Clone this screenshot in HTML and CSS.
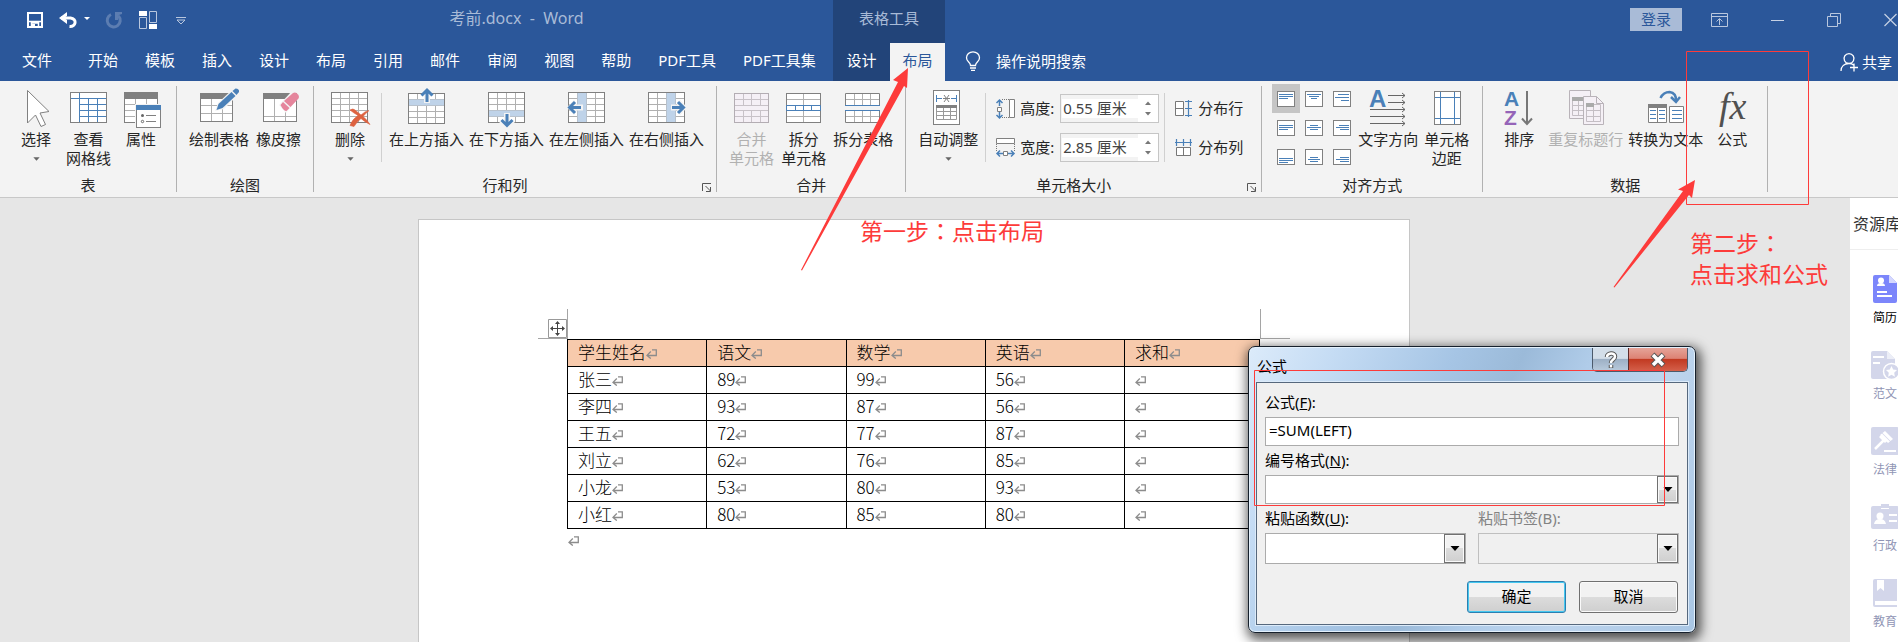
FILE: index.html
```html
<!DOCTYPE html>
<html lang="zh-CN">

<head>
    <meta charset="UTF-8">
    <meta name="viewport" content="width=device-width, initial-scale=1.0">
    <title>考前.docx - Word</title>
    <link rel="stylesheet" href="styles.css">
</head>

<body>
    <!-- shared shapes -->
    <svg class="defs" aria-hidden="true">
        <symbol id="grid" viewBox="0 0 37 31">
            <rect x=".5" y=".5" width="36" height="30" fill="#fff" stroke="#808080" />
            <path d="M9.5 1v29M18.5 1v29M27.5 1v29M1 6.5h35M1 12.5h35M1 18.5h35M1 24.5h35" stroke="#b0b0b0" fill="none" />
        </symbol>
        <symbol id="enter" viewBox="0 0 11 10">
            <path d="M6 .8h4.3v5.7H1.2M4.8 2.5L1 6.4l3.8 3.2" fill="none" stroke="#8c8c8c" stroke-width="1.3" />
        </symbol>
        <symbol id="launcher" viewBox="0 0 10 9">
            <path d="M.5 8V.5H9M3.500 3l5 5M8.500 4v4.500H4" fill="none" stroke="#555" />
        </symbol>
        <symbol id="drop" viewBox="0 0 10 5">
            <path d="M.5 0h9L5 5z" />
        </symbol>
    </svg>

    <header>
        <div class="titlebar flex">
            <div class="quick flex">
                <button type="button" aria-label="保存"><svg width="16" height="16"><path d="M1 1h14v14H1z" fill="none" stroke="#fff" stroke-width="2" /><path d="M1 9.500h14M4.500 15v-4h7v4" fill="none" stroke="#fff" stroke-width="1.500" /><path d="M5 12h3v4H5z" fill="#fff" /></svg></button>
                <button type="button" aria-label="撤消"><svg width="31" height="16"><path d="M2 6h9.500c7 1 5.500 9 -1 8.500" fill="none" stroke="#fff" stroke-width="3" /><path d="M8 0L0 6l8 6V8L5 6l3-2z" fill="#fff" /><path d="M25 5h6l-3 3z" fill="#fff" /></svg></button>
                <button type="button" aria-label="重复"><svg width="17" height="16"><path d="M5 2.500a6.500 6.500 0 1 0 7.500 1.500" fill="none" stroke="#5c7db1" stroke-width="3" /><path d="M9 0h7v2l-3 1-1 5H9z" fill="#5c7db1" /></svg></button>
                <button type="button" aria-label="窗口"><svg width="18" height="18"><path d="M.5 6.500h7v11h-7zM10.500 .5h7v11h-7z" fill="none" stroke="#b9c7de" /><path d="M0 0h8v5H0zM10 13h8v5h-8z" fill="#fff" /></svg></button>
                <button type="button" aria-label="自定义"><svg width="10" height="8"><path d="M0 1.500h10M1 4l4 4 4-4z" fill="none" stroke="#b9c7de" /></svg></button>
            </div>
            <div class="doc-title">考前.docx&nbsp; -&nbsp; Word</div>
            <div class="context-title">表格工具</div>
            <div class="window flex">
                <button class="login" type="button">登录</button>
                <button type="button" aria-label="功能区"><svg width="17" height="14"><path d="M.5 .5h16v13H.5zM.5 3.500h16M8.500 12V6M5.500 8.500l3-3 3 3" fill="none" stroke="#b9c7de" /></svg></button>
                <button type="button" aria-label="最小化"><svg width="13" height="14"><path d="M0 7.500h13" stroke="#c6d1e4" /></svg></button>
                <button type="button" aria-label="还原"><svg width="14" height="14"><path d="M.5 3.500h10v10H.5zM3.500 3V.5h10v10H11" fill="none" stroke="#b9c7de" /></svg></button>
                <button type="button" aria-label="关闭"><svg width="13" height="14"><path d="M.5 1l12 12M12.500 1l-12 12" stroke="#c6d1e4" stroke-width="1.200" /></svg></button>
            </div>
        </div>
        <nav class="tabs flex">
            <div class="main-tabs flex">
                <a class="file" href="#">文件</a>
                <a href="#">开始</a>
                <a href="#">模板</a>
                <a href="#">插入</a>
                <a href="#">设计</a>
                <a href="#">布局</a>
                <a href="#">引用</a>
                <a href="#">邮件</a>
                <a href="#">审阅</a>
                <a href="#">视图</a>
                <a href="#">帮助</a>
                <a href="#">PDF工具</a>
                <a href="#">PDF工具集</a>
            </div>
            <div class="context-tabs flex">
                <a href="#">设计</a>
                <a class="active" href="#">布局</a>
            </div>
            <a class="tell flex" href="#"><svg width="16" height="20"><path d="M5.500 14.500C5.500 11 1.500 11 1.500 6.800a6.500 6 0 0 1 13 0C14.500 11 10.500 11 10.500 14.500zM5 17h6M6 19.300h4" fill="none" stroke="#fff" stroke-width="1.300" /></svg>操作说明搜索</a>
            <a class="share flex" href="#"><svg width="18" height="19"><path d="M8.500 10.500a5 5 0 1 1 1 0M1 18c0-5 3.500-7.500 8-7.500 2 0 3.500 .5 4.500 1.500M14 10.500v8M10 14.500h8" fill="none" stroke="#fff" stroke-width="1.300" /></svg>共享</a>
        </nav>
    </header>

    <div class="ribbon flex">
        <section class="group g-table">
            <div class="tools">
                <button class="tool" type="button">
                    <svg class="icon"><path d="M10.500 2.500V35l8-8 5.500 11.500 4.500-2L23 25l9-1.500z" fill="#fff" stroke="#808080" /></svg>
                    <span>选择</span><svg class="caret"><use href="#drop" /></svg>
                </button>
                <button class="tool" type="button">
                    <svg class="icon"><rect x=".5" y="4.500" width="36" height="30" fill="#fff" stroke="#808080" /><path d="M9.500 5v29M1 10.500h35M18.500 11v23M27.500 11v23M10 16.500h26M10 22.500h26M10 28.500h26" stroke="#4a80b8" fill="none" /></svg>
                    <span>查看<br>网格线</span>
                </button>
                <button class="tool" type="button">
                    <svg class="icon"><rect x="2.500" y="4.500" width="33" height="30" fill="#fff" stroke="#808080" /><path d="M13.500 10v25M24.500 10v25M3 16.500h33M3 22.500h33M3 28.500h33" stroke="#b0b0b0" /><path d="M2 4h34v7H2z" fill="#808080" /><path d="M13 16h27v24H13z" fill="#f3f3f3" /><rect x="14.500" y="17.500" width="24" height="22" fill="#fff" stroke="#808080" /><path d="M14 17h25v5H14z" fill="#4a80b8" /><circle cx="20.500" cy="27.500" r="1.500" fill="#666" /><circle cx="20.500" cy="33.500" r="1.200" fill="none" stroke="#666" /><path d="M24 27.500h10M24 33.500h10" stroke="#808080" /></svg>
                    <span>属性</span>
                </button>
            </div>
            <h2>表</h2>
        </section>

        <section class="group g-draw">
            <div class="tools">
                <button class="tool" type="button">
                    <svg class="icon"><rect x=".5" y="5.500" width="32" height="28" fill="#fff" stroke="#808080" /><path d="M11.500 11v22M22.500 11v22M1 17.500h31M1 25.500h31" stroke="#b0b0b0" /><path d="M0 5h33v6H0z" fill="#808080" /><path d="M15 23l3-8L35-1l6 5-17 17z" fill="#f3f3f3" /><path d="M16.500 22l2-6 13-12 4 4-13 12z" fill="#4a80b8" /><path d="M32.500 3l3-2.500q4 0 3.500 3.500l-2.500 3z" fill="#4a80b8" /></svg>
                    <span>绘制表格</span>
                </button>
                <button class="tool" type="button">
                    <svg class="icon"><rect x="3.500" y="5.500" width="33" height="28" fill="#fff" stroke="#808080" /><path d="M14.500 11v22M25.500 11v22M4 28.500h32" stroke="#b0b0b0" /><path d="M3 5h34v6H3z" fill="#808080" /><path d="M19 17L32 3l8 5-14 17z" fill="#f3f3f3" /><path d="M24 13l9-8q2-1 3.500 0l2 2q1 2 0 3.500l-8 8.500zM20.500 17l2.500-3 6.500 6-3 3q-3 0-6-6z" fill="#e5859c" /></svg>
                    <span>橡皮擦</span>
                </button>
            </div>
            <h2>绘图</h2>
        </section>

        <section class="group g-rows">
            <div class="tools">
                <button class="tool" type="button">
                    <svg class="icon"><use href="#grid" y="4" width="37" height="31" /><path d="M19 22q3-2 5 0l6 5q4-4 8-4.500-4 3.500-6 6 4 3 7 8-6-3-9-6-4 3-7 8l-4-1q2-6 8-10-5-3-8-5.500z" fill="#dd6240" stroke="#dd6240" stroke-width=".6" /></svg>
                    <span>删除</span><svg class="caret"><use href="#drop" /></svg>
                </button>
                <i class="divider"></i>
                <div class="inserts">
                    <button class="tool" type="button">
                        <svg class="icon"><use href="#grid" y="5" width="37" height="31" /><path d="M1 11.500h35v6H1z" fill="#bfd3e9" /><path d="M13 7l6-7 6 7-3 2v6h-6V9z" fill="#f3f3f3" /><path d="M19 14V3M13.500 7.500L19 2l5.500 5.500" fill="none" stroke="#4a80b8" stroke-width="3" /></svg>
                        <span>在上方插入</span>
                    </button>
                    <button class="tool" type="button">
                        <svg class="icon"><use href="#grid" y="4" width="37" height="31" /><path d="M1 22.500h35v6H1z" fill="#bfd3e9" /><path d="M11 34l5-2v-7h6v7l5 2-8 7z" fill="#f3f3f3" /><path d="M19 26v11M13.500 32l5.500 5.500 5.500-5.500" fill="none" stroke="#4a80b8" stroke-width="3" /></svg>
                        <span>在下方插入</span>
                    </button>
                    <button class="tool" type="button">
                        <svg class="icon"><use href="#grid" y="4" width="37" height="31" /><path d="M9.500 5h9v29h-9z" fill="#bfd3e9" /><path d="M-1 19.500l7-8 3 5h6v6H9l-3 5z" fill="#f3f3f3" /><path d="M13 19.500H2M7 14l-5.500 5.500L7 25" fill="none" stroke="#4a80b8" stroke-width="3" /></svg>
                        <span>在左侧插入</span>
                    </button>
                    <button class="tool" type="button">
                        <svg class="icon"><use href="#grid" y="4" width="37" height="31" /><path d="M18.500 5h9v29h-9z" fill="#bfd3e9" /><path d="M39 19.500l-7-8-3 5h-6v6h6l3 5z" fill="#f3f3f3" /><path d="M24 19.500h11M30 14l5.500 5.500L30 25" fill="none" stroke="#4a80b8" stroke-width="3" /></svg>
                        <span>在右侧插入</span>
                    </button>
                </div>
            </div>
            <h2>行和列</h2>
            <svg class="launcher"><use href="#launcher" /></svg>
        </section>

        <section class="group g-merge">
            <div class="tools">
                <button class="tool" type="button" disabled>
                    <svg class="icon"><rect x="1.500" y="5.500" width="34" height="29" fill="#f5f0f6" stroke="#b3adb3" /><path d="M2 11.500h33M2 17.500h33M2 22.500h33M2 28.500h33M10.500 6v11M18.500 6v11M27.500 6v11M10.500 23v11M18.500 23v11M27.500 23v11" stroke="#c8c2c8" /></svg>
                    <span>合并<br>单元格</span>
                </button>
                <button class="tool" type="button">
                    <svg class="icon"><rect x="1.500" y="5.500" width="34" height="29" fill="#fff" stroke="#808080" /><path d="M2 11.500h33M2 28.500h33M18.500 6v11M18.500 23v11" stroke="#b0b0b0" /><path d="M1.500 17.500h34v5h-34zM10.500 18v5M18.500 18v5M26.500 18v5" fill="none" stroke="#4a80b8" /></svg>
                    <span>拆分<br>单元格</span>
                </button>
                <button class="tool" type="button">
                    <svg class="icon"><path d="M1 5h35v13H1zM1 22h35v13H1z" fill="#fff" /><path d="M10.500 6v11M18.500 6v11M26.500 6v11M2 11.500h33M10.500 23v11M18.500 23v11M26.500 23v11M2 28.500h33" stroke="#b0b0b0" /><path d="M1.500 17V5.500h34V17M1.500 23v11.500h34V23" fill="none" stroke="#808080" /><path d="M1 17.500h35M1 22.500h35" stroke="#4a80b8" /></svg>
                    <span>拆分表格</span>
                </button>
            </div>
            <h2>合并</h2>
        </section>

        <section class="group g-size">
            <div class="tools">
                <button class="tool" type="button">
                    <svg class="icon"><rect x="4.500" y="2.500" width="26" height="34" fill="#fff" stroke="#808080" /><path d="M7.500 7v7M27.500 7v7M8 10.500h5M22 10.500h5" stroke="#4a80b8" /><path d="M15 7l5 7M20 7l-5 7M14 10.500h7" stroke="#808080" /><path d="M7.500 18.500h20v13h-20zM14.500 20v11M21.500 20v11M8 23.500h19M8 27.500h19" fill="none" stroke="#999" /><path d="M7 17h21v3H7z" fill="#808080" /></svg>
                    <span>自动调整</span><svg class="caret"><use href="#drop" /></svg>
                </button>
                <i class="divider"></i>
                <div class="size-rows">
                    <div class="size-row flex">
                        <svg width="19" height="20"><path d="M13.500 .5h5v18h-5z" fill="#fff" stroke="#808080" /><path d="M6 .5h7M6 18.500h7" stroke="#777" stroke-dasharray="1 1" /><path d="M3.500 7V1M.5 4l3-3 3 3M3.500 13v6M.5 16l3 3 3-3" fill="none" stroke="#4a80b8" stroke-width="1.500" /><path d="M1.500 8.500h4v4h-4z" fill="#fff" stroke="#808080" /></svg>
                        <label for="row-height">高度:</label>
                        <div class="spin flex">
                            <input type="text" id="row-height" value="0.55 厘米">
                            <span class="steps"><svg><path d="M0 4l3-3.500L6 4z" /></svg><svg><path d="M0 0h6L3 3.500z" /></svg></span>
                        </div>
                    </div>
                    <div class="size-row flex">
                        <svg width="19" height="20"><path d="M.5 .5h18v5H.5z" fill="#fff" stroke="#808080" /><path d="M.5 6v7M18.500 6v7" stroke="#777" stroke-dasharray="1 1" /><path d="M7 15.500H1M4 12.500l-3 3 3 3M12 15.500h6M15 12.500l3 3-3 3" fill="none" stroke="#4a80b8" stroke-width="1.500" /><path d="M7.500 13.500h4v4h-4z" fill="#fff" stroke="#808080" /></svg>
                        <label for="col-width">宽度:</label>
                        <div class="spin flex">
                            <input type="text" id="col-width" value="2.85 厘米">
                            <span class="steps"><svg><path d="M0 4l3-3.500L6 4z" /></svg><svg><path d="M0 0h6L3 3.500z" /></svg></span>
                        </div>
                    </div>
                </div>
                <i class="divider"></i>
                <div class="size-rows">
                    <button class="small flex" type="button"><svg width="17" height="17"><path d="M.5 1.500h8v14h-8zM.5 8.500h8" fill="#fff" stroke="#777" /><path d="M10 1.500h7M10 15.500h7M10 8.500h7M13.500 0v17" stroke="#4a80b8" stroke-width="1.200" /></svg>分布行</button>
                    <button class="small flex" type="button"><svg width="17" height="17"><path d="M1.500 8.500h14v8h-14zM8.500 8.500v8" fill="#fff" stroke="#777" /><path d="M0 3.500h17M1.500 0v7M8.500 0v7M15.500 0v7" stroke="#4a80b8" stroke-width="1.200" /></svg>分布列</button>
                </div>
            </div>
            <h2>单元格大小</h2>
            <svg class="launcher"><use href="#launcher" /></svg>
        </section>

        <section class="group g-align">
            <div class="tools">
                <div class="align-grid">
                    <button class="on" type="button" aria-label="靠上左对齐"><svg><path d="M2 3.500h14M2 5.500h14M2 7.500h9" /></svg></button>
                    <button type="button" aria-label="靠上居中"><svg><path d="M2 3.500h14M4 5.500h10M6 7.500h6" /></svg></button>
                    <button type="button" aria-label="靠上右对齐"><svg><path d="M5 3.500h11M2 6.500h14M8 9.500h8" /></svg></button>
                    <button type="button" aria-label="左对齐"><svg><path d="M2 5.500h14M2 7.500h14M2 9.500h9" /></svg></button>
                    <button type="button" aria-label="居中"><svg><path d="M5 5.500h8M2 7.500h14M5 9.500h8" /></svg></button>
                    <button type="button" aria-label="右对齐"><svg><path d="M6 5.500h10M3 7.500h13M7 9.500h9" /></svg></button>
                    <button type="button" aria-label="靠下左对齐"><svg><path d="M2 9.500h14M2 11.500h14M2 13.500h9" /></svg></button>
                    <button type="button" aria-label="靠下居中"><svg><path d="M5 8.500h8M3 10.500h12M5 12.500h8" /></svg></button>
                    <button type="button" aria-label="靠下右对齐"><svg><path d="M7 8.500h9M3 10.500h13M7 12.500h9" /></svg></button>
                </div>
                <button class="tool" type="button">
                    <svg class="icon"><text class="letter" x="0" y="19">A</text><path d="M19 7.500h17M19 14.500h17M1 21.500h35M1 28.500h35M1 35.500h35M33 5l3 2.500-3 2.500M33 12l3 2.500-3 2.500M33 19l3 2.500-3 2.500M33 26l3 2.500-3 2.500M33 33l3 2.500-3 2.500" fill="none" stroke="#666" /></svg>
                    <span>文字方向</span>
                </button>
                <button class="tool" type="button">
                    <svg class="icon"><rect x="6.500" y="3.500" width="26" height="33" fill="#fff" stroke="#808080" /><path d="M12.500 4v32M26.500 4v32M7 9.500h25M7 30.500h25" stroke="#4a80b8" /></svg>
                    <span>单元格<br>边距</span>
                </button>
            </div>
            <h2>对齐方式</h2>
        </section>

        <section class="group g-data">
            <div class="tools">
                <button class="tool" type="button">
                    <svg class="icon"><text class="sort-a" x="4" y="18">A</text><text class="sort-z" x="4" y="37">Z</text><path d="M27 3v33M22 30.500l5 5.500 5-5.500" fill="none" stroke="#777" stroke-width="2" /></svg>
                    <span>排序</span>
                </button>
                <button class="tool" type="button" disabled>
                    <svg class="icon"><path d="M2.500 2.500h21v28h-21z" fill="#f5f0f6" stroke="#b9b3b9" /><path d="M5.500 9.500h12v18h-12zM11.500 10v17M6 17.500h11M6 22.500h11" fill="none" stroke="#c4bec4" /><path d="M5 9h12v4H5z" fill="#aaa" /><path d="M16.500 8.500h13l7 7v21h-20z" fill="#f5f0f6" stroke="#b9b3b9" /><path d="M29.500 8.500v7h7" fill="none" stroke="#b9b3b9" /><path d="M19.500 16.500h14v17h-14zM26.500 17v17M20 22.500h13M20 28.500h13" fill="none" stroke="#c4bec4" /><path d="M19 15h8v4h-8z" fill="#aaa" /></svg>
                    <span>重复标题行</span>
                </button>
                <button class="tool" type="button">
                    <svg class="icon"><path d="M1.500 17.500h18v17h-18zM10.500 20v15" fill="#fff" stroke="#808080" /><path d="M1 16h19v4H1z" fill="#808080" /><path d="M3 22.500h6M3 26.500h6M3 30.500h6M12 22.500h6M12 26.500h6M12 30.500h6" stroke="#4a80b8" /><path d="M22.500 18.500h14v16h-14z" fill="#fff" stroke="#808080" /><path d="M25 22.500h10M25 26.500h10M25 30.500h10" stroke="#4a80b8" /><path d="M13.500 10q3-6 9-6 7 1 6.500 9M24 9l5 5 4-5" fill="none" stroke="#4a80b8" stroke-width="2.500" /></svg>
                    <span>转换为文本</span>
                </button>
                <button class="tool" type="button">
                    <svg class="icon"><text class="fx" x="6" y="31">fx</text></svg>
                    <span>公式</span>
                </button>
            </div>
            <h2>数据</h2>
        </section>
    </div>

    <main class="workspace flex">
        <div class="canvas flex">
            <article class="page">
                <div class="margins flex">
                    <span class="corner left"><svg width="19" height="19"><path d="M.5 .5h18v18H.5z" fill="#fff" stroke="#999" /><path d="M9.500 3v13M3 9.500h13" stroke="#444" /><path d="M9.500 2l2.500 3H7zM9.500 17L7 14h5zM2 9.500L5 7v5zM17 9.500L14 12V7z" fill="#444" /></svg></span>
                    <span class="corner right"></span>
                </div>
                <table>
                    <thead>
                        <tr><th>学生姓名<svg class="enter"><use href="#enter" /></svg></th><th>语文<svg class="enter"><use href="#enter" /></svg></th><th>数学<svg class="enter"><use href="#enter" /></svg></th><th>英语<svg class="enter"><use href="#enter" /></svg></th><th class="sum">求和<svg class="enter"><use href="#enter" /></svg></th></tr>
                    </thead>
                    <tbody>
                        <tr><td>张三<svg class="enter"><use href="#enter" /></svg></td><td>89<svg class="enter"><use href="#enter" /></svg></td><td>99<svg class="enter"><use href="#enter" /></svg></td><td>56<svg class="enter"><use href="#enter" /></svg></td><td><svg class="enter"><use href="#enter" /></svg></td></tr>
                        <tr><td>李四<svg class="enter"><use href="#enter" /></svg></td><td>93<svg class="enter"><use href="#enter" /></svg></td><td>87<svg class="enter"><use href="#enter" /></svg></td><td>56<svg class="enter"><use href="#enter" /></svg></td><td><svg class="enter"><use href="#enter" /></svg></td></tr>
                        <tr><td>王五<svg class="enter"><use href="#enter" /></svg></td><td>72<svg class="enter"><use href="#enter" /></svg></td><td>77<svg class="enter"><use href="#enter" /></svg></td><td>87<svg class="enter"><use href="#enter" /></svg></td><td><svg class="enter"><use href="#enter" /></svg></td></tr>
                        <tr><td>刘立<svg class="enter"><use href="#enter" /></svg></td><td>62<svg class="enter"><use href="#enter" /></svg></td><td>76<svg class="enter"><use href="#enter" /></svg></td><td>85<svg class="enter"><use href="#enter" /></svg></td><td><svg class="enter"><use href="#enter" /></svg></td></tr>
                        <tr><td>小龙<svg class="enter"><use href="#enter" /></svg></td><td>53<svg class="enter"><use href="#enter" /></svg></td><td>80<svg class="enter"><use href="#enter" /></svg></td><td>93<svg class="enter"><use href="#enter" /></svg></td><td><svg class="enter"><use href="#enter" /></svg></td></tr>
                        <tr><td>小红<svg class="enter"><use href="#enter" /></svg></td><td>80<svg class="enter"><use href="#enter" /></svg></td><td>85<svg class="enter"><use href="#enter" /></svg></td><td>80<svg class="enter"><use href="#enter" /></svg></td><td><svg class="enter"><use href="#enter" /></svg></td></tr>
                    </tbody>
                </table>
                <p class="after-table"><svg class="enter"><use href="#enter" /></svg></p>
            </article>
        </div>
        <aside class="library">
            <h3>资源库</h3>
            <a class="active" href="#"><svg><path d="M2 2q0-2 2-2h14l8 8v18q0 2-2 2H4q-2 0-2-2z" fill="#7c86fb" /><path d="M18 0v8h8z" fill="#d5d8fe" /><circle cx="10" cy="5.500" r="3" fill="#fff" /><path d="M6 11q0-3 4-3t4 3zM6 16h10v2H6zM6 20h15v2H6z" fill="#fff" /></svg>简历</a>
            <a href="#"><svg><path d="M0 2q0-2 2-2h14l8 8v20H2q-2 0-2-2z" fill="#d3d6ea" /><path d="M16 0v8h8z" fill="#eceef7" /><path d="M2 5h11v2H2zM2 11h7v2H2z" fill="#fff" /><circle cx="20.500" cy="20.500" r="8" fill="#d3d6ea" stroke="#fff" stroke-width="1.500" /><path d="M20.500 15l1.700 3.600 3.800 .5-2.800 2.700 .7 3.900-3.400-1.900-3.400 1.900 .7-3.900-2.800-2.700 3.800-.5z" fill="#fff" /></svg>范文</a>
            <a href="#"><svg><rect width="28" height="28" rx="2" fill="#d3d6ea" /><path d="M14 4l8 8-2.500 2-8-8zM9 8l2-1.500 8 8L17 16zM8 10l3-3 6 6-3 3z" fill="#fff" /><path d="M13 13l-9 9" stroke="#fff" stroke-width="2.500" /><path d="M13 23h12v2H13z" fill="#fff" /></svg>法律</a>
            <a href="#"><svg><path d="M0 5q0-2 2-2h24q2 0 2 2v19q0 2-2 2H2q-2 0-2-2zM10 1h8v5h-8z" fill="#d3d6ea" /><path d="M10 5.500h8" stroke="#fff" /><circle cx="9" cy="13" r="3.500" fill="#fff" /><path d="M3 21q1-5 6-5t6 5zM18 11h8v2h-8zM18 17h8v2h-8z" fill="#fff" /></svg>行政</a>
            <a href="#"><svg><path d="M2 2q0-2 2-2h22v28H4q-2 0-2-2z" fill="#d3d6ea" /><path d="M6 1h7v11l-3.500-3L6 12zM4 22h22v4H4z" fill="#fff" /></svg>教育</a>
        </aside>
    </main>

    <form class="dialog" aria-label="公式">
        <div class="dialog-title flex">
            <span>公式</span>
            <div class="caption flex">
                <button class="help" type="button" aria-label="帮助"><svg width="14" height="18"><path d="M3 6c0-4 8-5 8-.5C11 8.500 7 8.500 7 12M7 14v3" fill="none" stroke="#555" stroke-width="4.500" /><path d="M3 6c0-4 8-5 8-.5C11 8.500 7 8.500 7 12M7 14v2.500" fill="none" stroke="#fff" stroke-width="2.500" /></svg></button>
                <button class="close" type="button" aria-label="关闭"><svg width="16" height="14"><path d="M2.500 1.500l11 11M13.500 1.500l-11 11" stroke="#555" stroke-width="5.500" /><path d="M3 2l10 10M13 2L3 12" stroke="#fff" stroke-width="3.500" /></svg></button>
            </div>
        </div>
        <div class="dialog-body">
            <label for="formula">公式(<u>F</u>):</label>
            <input type="text" id="formula" value="=SUM(LEFT)">
            <label for="format">编号格式(<u>N</u>):</label>
            <div class="combo"><select id="format"><option></option></select><i><svg><use href="#drop" /></svg></i></div>
            <div class="pair flex">
                <div>
                    <label for="func">粘贴函数(<u>U</u>):</label>
                    <div class="combo tall"><select id="func"><option></option></select><i><svg><use href="#drop" /></svg></i></div>
                </div>
                <div>
                    <label class="off" for="bookmark">粘贴书签(B):</label>
                    <div class="combo tall"><select id="bookmark" disabled><option></option></select><i><svg><use href="#drop" /></svg></i></div>
                </div>
            </div>
            <div class="actions flex">
                <button class="ok" type="button">确定</button>
                <button type="button">取消</button>
            </div>
        </div>
    </form>

    <!-- tutorial marks over the window -->
    <svg class="marks" width="1898" height="642" aria-hidden="true">
        <path d="M908 68L893 80l5 2L801 270l1 .5L904 86l3 2zM1695 180l-17 9.500 5 1.500L1613.500 287l1 .5L1689 195l3 3z" fill="#fd3b3a" />
        <path d="M1686.500 51.500h122v153h-122zM1254.500 370.500h410v135h-410z" fill="none" stroke="#fd3b3a" />
    </svg>
    <p class="note step-one">第一步<span lang="zh-TW">：</span>点击布局</p>
    <p class="note step-two">第二步<span lang="zh-TW">：</span><br>点击求和公式</p>
</body>

</html>
```
FILE: styles.css
```css
* {
    box-sizing: border-box;
    padding: 0;
    margin: 0;
}

:root {
    --blue: #2b579a;
    --dark-blue: #224479;
    --pale: #a9bbd7;
    --red: #fd3b3a;
    --context-left: 833px;
    --context-width: 112px;
}

body {
    min-height: 100vh;
    display: flex;
    flex-direction: column;
    position: relative;
    overflow: hidden;
    font-family: "Noto Sans", "Noto Sans CJK SC", sans-serif;
    font-size: 15px;
    line-height: 19px;
    color: #262626;
    background-color: #e6e6e6;
}

button,
input,
select {
    font: inherit;
    color: inherit;
    border: none;
    background: none;
}

a {
    color: inherit;
    text-decoration: none;
}

svg {
    display: block;
    flex-shrink: 0;
    overflow: visible;
}

.defs {
    position: absolute;
    width: 0;
    height: 0;
}

.flex {
    display: flex;
    align-items: center;
}

/* title bar */
header {
    background-color: var(--blue);
    color: white;
}

.titlebar {
    height: 43px;
    color: var(--pale);
}

.quick {
    flex: 0 0 200px;
    height: 43px;
    padding: 0 8px 3px 27px;
    gap: 16px;
}

.quick button:last-child {
    margin-left: 3px;
}

.doc-title {
    flex: 0 0 calc(var(--context-left) - 200px);
    text-align: center;
    font-size: 16px;
    padding-bottom: 6px;
}

.context-title {
    flex: 0 0 var(--context-width);
    height: 43px;
    line-height: 37px;
    text-align: center;
    background-color: var(--dark-blue);
}

.window {
    margin-left: auto;
    height: 43px;
    padding: 0 1px 4px 0;
    gap: 43px;
}

.login {
    width: 52px;
    height: 23px;
    margin-right: -14px;
    line-height: 21px;
    background-color: var(--pale);
    color: var(--blue);
}

/* tabs */
.tabs {
    height: 38px;
    line-height: 34px;
}

.main-tabs {
    flex: 0 0 var(--context-left);
    height: 38px;
    padding: 0 0 4px 22px;
    gap: 27px;
}

.file {
    margin-right: 9px;
}

.context-tabs {
    flex: 0 0 var(--context-width);
    height: 38px;
    background-color: var(--dark-blue);
}

.context-tabs a {
    flex: 1 0 57px;
    height: 38px;
    text-align: center;
}

.context-tabs .active {
    flex-basis: 55px;
    background-color: #f3f3f3;
    color: var(--blue);
}

.tell {
    height: 38px;
    margin-left: 20px;
    padding-bottom: 3px;
    gap: 15px;
}

.share {
    margin-left: auto;
    margin-right: 6px;
    gap: 4px;
}

/* ribbon */
.ribbon {
    height: 117px;
    align-items: stretch;
    background-color: #f3f3f3;
    border-bottom: 1px solid #c8c8c8;
}

.group {
    display: flex;
    flex-direction: column;
    flex-shrink: 0;
    justify-content: space-between;
    position: relative;
    margin: 5px 0;
    padding-top: 2px;
    border-right: 1px solid #b1b1b1;
}

.group h2 {
    font-size: 15px;
    font-weight: normal;
    line-height: 14px;
    text-align: center;
}

.tools {
    display: flex;
    align-items: flex-start;
}

.tool {
    display: flex;
    flex-direction: column;
    align-items: center;
    flex-shrink: 0;
    min-width: 38px;
    white-space: nowrap;
}

.tool:disabled {
    color: #b1b1b1;
}

.icon {
    width: 38px;
    height: 42px;
}

.caret {
    width: 7px;
    height: 4px;
    margin-top: 8px;
    fill: #666;
}

.divider {
    width: 1px;
    height: 69px;
    margin-top: 5px;
    background-color: #d0d0d0;
}

.launcher {
    position: absolute;
    right: 4px;
    bottom: 0;
    width: 10px;
    height: 9px;
}

.g-table .tools {
    padding: 0 16px 0 17px;
    gap: 11px;
}

.g-draw .tools,
.g-merge .tools {
    padding: 0 12px;
    gap: 7px;
}

.g-rows .tools {
    padding: 0 12px 0 17px;
    gap: 12px;
}

.g-rows .divider {
    margin-right: -5px;
}

.g-rows h2,
.g-size h2 {
    padding-right: 20px;
}

.inserts {
    display: flex;
    gap: 5px;
}

.g-size .tools {
    padding: 0 18px 0 12px;
}

.g-size .divider {
    margin-left: 7px;
    margin-right: 10px;
}

.size-rows {
    display: flex;
    flex-direction: column;
    gap: 10px;
    padding-top: 6px;
}

.size-rows + .divider {
    margin-left: 5px;
}

.size-row {
    gap: 5px;
}

.size-row label {
    width: 35px;
}

.spin {
    width: 99px;
    height: 29px;
    border: 1px solid #c6c6c6;
    background-color: #f3f3f3;
}

.spin input {
    flex: 1;
    min-width: 0;
    height: 19px;
    margin-left: 1px;
    padding-left: 1px;
    background-color: white;
    color: #444;
}

.steps {
    width: 20px;
    height: 27px;
    display: flex;
    flex-direction: column;
    justify-content: space-evenly;
    align-items: center;
    background-color: white;
}

.steps svg {
    width: 6px;
    height: 4px;
    fill: #777;
}

.small {
    height: 29px;
    gap: 6px;
    white-space: nowrap;
}

.g-align .tools {
    padding: 0 13px 0 10px;
}

.g-align .tool + .tool {
    margin-left: 6px;
}

.align-grid {
    display: grid;
    grid-template-columns: repeat(3, 28px);
    grid-auto-rows: 29px;
    margin: -4px 2px 0 0;
}

.align-grid button {
    padding: 6px 5px;
}

.align-grid .on {
    background-color: #c5c5c5;
}

.align-grid svg {
    width: 18px;
    height: 16px;
    border: 1px solid #808080;
    background-color: white;
    stroke: #4a80b8;
}

.align-grid path {
    transform: translate(-1px, -1px);
}

.g-data .tools {
    padding: 0 16px 0 17px;
    gap: 10px;
}

.g-data .tool:nth-child(3) {
    margin-left: -5px;
}

.letter,
.sort-a,
.sort-z {
    font-family: "Liberation Sans", Arial, sans-serif;
    font-weight: bold;
    font-size: 24px;
    fill: #4a80b8;
}

.sort-a,
.sort-z {
    font-size: 21px;
}

.sort-z {
    fill: #9564b8;
}

.fx {
    font-family: "Liberation Serif", "Times New Roman", serif;
    font-style: italic;
    font-size: 38px;
    fill: #505050;
}

/* document */
.workspace {
    flex: 1;
    align-items: stretch;
}

.canvas {
    flex: 1;
    align-items: stretch;
    justify-content: center;
    padding: 21px 22px 0 0;
}

.page {
    width: 992px;
    padding: 89px 119px 0;
    background-color: white;
    border: 1px solid #c6c6c6;
    border-bottom: none;
}

.margins {
    justify-content: space-between;
}

.corner {
    width: 30px;
    height: 30px;
    display: flex;
    justify-content: flex-end;
    align-items: flex-end;
    border-bottom: 1px solid #a5a5a5;
}

.corner.left {
    border-right: 1px solid #a5a5a5;
}

.corner.right {
    border-left: 1px solid #a5a5a5;
}

table {
    width: 693px;
    margin-left: 29px;
    border-collapse: collapse;
    table-layout: fixed;
    font-family: "Noto Sans CJK SC", sans-serif;
    font-size: 17px;
    font-weight: 300;
    color: black;
}

th,
td {
    height: 27px;
    padding: 0 0 3px 10px;
    line-height: 22px;
    text-align: left;
    font-weight: 300;
    border: 1px solid black;
}

th {
    background-color: #f7caac;
}

.sum {
    width: 135px;
}

.enter {
    display: inline-block;
    width: 11px;
    height: 10px;
}

.after-table {
    margin: 2px 0 0 30px;
}

/* resource library */
.library {
    flex: 0 0 48px;
    overflow: hidden;
    background-color: white;
    color: #9095b5;
    font-size: 12px;
}

.library h3 {
    width: 70px;
    height: 52px;
    padding-left: 3px;
    line-height: 52px;
    font-size: 16px;
    font-weight: normal;
    color: #333;
    border-bottom: 1px solid #eee;
    white-space: nowrap;
}

.library a {
    width: 70px;
    height: 76px;
    padding-top: 25px;
    display: flex;
    flex-direction: column;
    align-items: center;
    gap: 5px;
}

.library .active {
    color: black;
}

.library svg {
    width: 28px;
    height: 28px;
}

/* formula dialog */
.dialog {
    position: absolute;
    left: 1248px;
    top: 346px;
    width: 448px;
    padding: 0 7px 7px;
    color: black;
    border: 1px solid #16202c;
    border-radius: 7px;
    background: linear-gradient(115deg, #dcebfa 0, #c5dcf4 15%, #a6c5e5 36%, #9bbad9 48%, #b0cce9 60%, #bdd4ed 75%, #a9c6e4 100%);
    box-shadow: inset 0 0 0 1px #e4f1fc, 2px 4px 12px 3px rgba(0, 0, 0, 0.65);
}

.dialog-title {
    height: 35px;
    justify-content: space-between;
    padding-left: 1px;
}

.dialog-title span {
    padding-top: 3px;
}

.caption {
    align-self: flex-start;
    margin-top: 1px;
    border: 1px solid #4c5a6b;
    border-top: none;
    border-radius: 0 0 5px 5px;
    overflow: hidden;
}

.caption button {
    display: flex;
    justify-content: center;
    align-items: center;
    height: 23px;
}

.help {
    width: 35px;
    background: linear-gradient(#d3dee9 45%, #9db0c5 50%, #b9cbdd);
}

.caption .close {
    width: 59px;
    border-left: 1px solid #5b2b2b;
    background: linear-gradient(#e5a499, #dd8274 45%, #c23a22 50%, #d4604a);
}

.dialog-body {
    padding: 5px 8px 11px;
    border: 1px solid #56687d;
    box-shadow: 0 0 0 1px #dcebfa;
    background-color: #f0f0f0;
}

.dialog-body label {
    display: block;
    line-height: 29px;
}

.dialog-body .off {
    color: #838383;
}

#formula {
    display: block;
    width: 100%;
    height: 29px;
    padding: 0 3px 4px;
    border: 1px solid #ababab;
    background-color: white;
}

.combo {
    position: relative;
}

.combo select {
    display: block;
    width: 100%;
    height: 29px;
    appearance: none;
    border: 1px solid #ababab;
    background-color: white;
}

.combo select:disabled {
    background-color: #f0f0f0;
}

.combo.tall select {
    height: 31px;
}

.combo i {
    position: absolute;
    top: 1px;
    right: 1px;
    bottom: 1px;
    width: 21px;
    display: flex;
    justify-content: center;
    align-items: center;
    border: 1px solid #707070;
    background: linear-gradient(#f2f2f2 50%, #dcdcdc 50%, #cfcfcf);
    box-shadow: inset 0 0 0 1px #fafafa;
    pointer-events: none;
}

.combo svg {
    width: 10px;
    height: 5px;
}

.pair {
    gap: 12px;
}

.pair > div {
    flex: 1;
}

.actions {
    justify-content: flex-end;
    gap: 13px;
    margin-top: 17px;
    padding-right: 1px;
}

.actions button {
    width: 99px;
    height: 32px;
    padding-bottom: 1px;
    border: 1px solid #707070;
    border-radius: 3px;
    background: linear-gradient(#f2f2f2 50%, #dcdcdc 50%, #cfcfcf);
    box-shadow: inset 0 0 0 1px #fafafa;
}

.actions .ok {
    border-color: #2c7fb0;
    box-shadow: inset 0 0 0 1px #45c8f0;
}

/* marks */
.marks {
    position: absolute;
    left: 0;
    top: 0;
    pointer-events: none;
}

.note {
    position: absolute;
    font-family: "Noto Sans CJK SC", sans-serif;
    font-size: 23px;
    line-height: 31px;
    color: var(--red);
    white-space: nowrap;
}

.note span {
    font-family: "Noto Sans CJK TC", sans-serif;
}

.step-one {
    left: 860px;
    top: 215px;
}

.step-two {
    left: 1690px;
    top: 227px;
}
```
